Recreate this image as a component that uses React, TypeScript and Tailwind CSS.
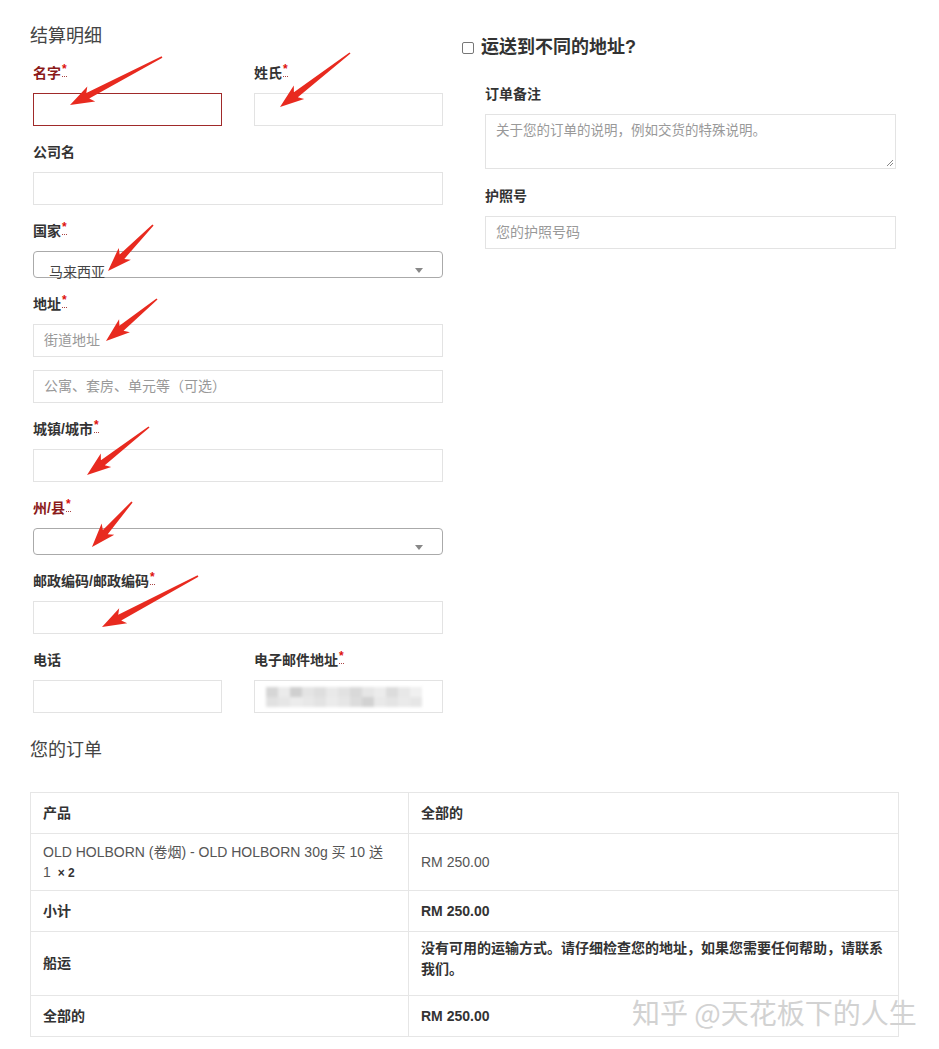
import React from "react";

type ArrowProps = { x1: number; y1: number; x2: number; y2: number };

function arrowPoints({ x1, y1, x2, y2 }: ArrowProps) {
  const dx = x2 - x1;
  const dy = y2 - y1;
  const len = Math.hypot(dx, dy);
  const ux = dx / len;
  const uy = dy / len;
  const nx = -uy;
  const ny = ux;
  const at = (t: number, w: number) =>
    `${(x1 + ux * t + nx * w).toFixed(1)},${(y1 + uy * t + ny * w).toFixed(1)}`;
  const head = 24;
  return [
    at(0, 0.8),
    at(len - head + 4, 3.2),
    at(len - head, 8.5),
    at(len, 0),
    at(len - head, -8.5),
    at(len - head + 4, -3.2),
    at(0, -0.8),
  ].join(" ");
}

const arrows: ArrowProps[] = [
  { x1: 162, y1: 57, x2: 70, y2: 105 },
  { x1: 350, y1: 53, x2: 280, y2: 107 },
  { x1: 153, y1: 225, x2: 108, y2: 271 },
  { x1: 157, y1: 299, x2: 106, y2: 341 },
  { x1: 149, y1: 427, x2: 87, y2: 475 },
  { x1: 132, y1: 502, x2: 92, y2: 547 },
  { x1: 198, y1: 576, x2: 102, y2: 627 },
];

const blur = [
  ["#d6d6d6", "#ebebeb", "#cfcfcf", "#e4e4e4", "#dedede", "#e9e9e9", "#e2e2e2", "#d9d9d9", "#e6e6e6", "#ececec", "#dcdcdc", "#e8e8e8", "#f0f0f0"],
  ["#e1e1e1", "#e6e6e6", "#ececec", "#e8e8e8", "#e3e3e3", "#ebebeb", "#e6e6e6", "#dcdcdc", "#d2d2d2", "#e9e9e9", "#e4e4e4", "#eaeaea", "#e6e6e6"],
];

function Req() {
  return (
    <abbr className="text-[#d11] no-underline border-b border-dotted border-[#a44] text-[12px] leading-none ml-[1px] align-top">
      *
    </abbr>
  );
}

function Label({ text, req, error }: { text: string; req?: boolean; error?: boolean }) {
  return (
    <label
      className={`block h-[20px] leading-[20px] mb-[10px] text-[14px] font-bold ${
        error ? "text-[#8b1a1a]" : "text-[#333]"
      }`}
    >
      {text}
      {req && <Req />}
    </label>
  );
}

function Input({ placeholder, error }: { placeholder?: string; error?: boolean }) {
  return (
    <div
      className={`h-[33px] w-full border bg-white px-[10px] flex items-center text-[14px] text-[#999] ${
        error ? "border-[#a02a2a]" : "border-[#e3e3e3]"
      }`}
    >
      {placeholder}
    </div>
  );
}

function Select({ value }: { value?: string }) {
  return (
    <div className="relative h-[27px] w-full border border-[#aaa] rounded-[4px] bg-white">
      <span className="absolute left-[15px] top-[10px] text-[14px] leading-[20px] text-[#444]">{value}</span>
      <span className="absolute right-[19px] top-[16px] w-0 h-0 border-l-[4px] border-r-[4px] border-t-[5px] border-l-transparent border-r-transparent border-t-[#888]" />
    </div>
  );
}

export default function App() {
  return (
    <div className="relative w-[939px] h-[1049px] bg-white overflow-hidden font-['Liberation_Sans','Noto_Sans_CJK_SC',sans-serif] text-[#333]">
      <div className="flex pl-[30px] pt-[23px]">
        {/* Billing */}
        <div className="w-[416px]">
          <h3 className="h-[27px] leading-[27px] text-[18px] font-normal text-[#444] mb-[13px]">结算明细</h3>
          <div className="px-[3px]">
            <div className="flex gap-[32px] mb-[16px]">
              <div className="flex-1">
                <Label text="名字" req error />
                <Input error />
              </div>
              <div className="flex-1">
                <Label text="姓氏" req />
                <Input />
              </div>
            </div>
            <div className="mb-[16px]">
              <Label text="公司名" />
              <Input />
            </div>
            <div className="mb-[16px]">
              <Label text="国家" req />
              <Select value="马来西亚" />
            </div>
            <div className="mb-[16px]">
              <Label text="地址" req />
              <Input placeholder="街道地址" />
              <div className="h-[13px]" />
              <Input placeholder="公寓、套房、单元等（可选）" />
            </div>
            <div className="mb-[16px]">
              <Label text="城镇/城市" req />
              <Input />
            </div>
            <div className="mb-[16px]">
              <Label text="州/县" req error />
              <Select />
            </div>
            <div className="mb-[16px]">
              <Label text="邮政编码/邮政编码" req />
              <Input />
            </div>
            <div className="flex gap-[32px]">
              <div className="flex-1">
                <Label text="电话" />
                <Input />
              </div>
              <div className="flex-1">
                <Label text="电子邮件地址" req />
                <div className="h-[33px] border border-[#e3e3e3] px-[11px] flex flex-col justify-center">
                  <div className="blur-[1.5px]">
                    {blur.map((row, i) => (
                      <div key={i} className="flex">
                        {row.map((c, j) => (
                          <div key={j} className="w-[12px] h-[10px]" style={{ background: c }} />
                        ))}
                      </div>
                    ))}
                  </div>
                </div>
              </div>
            </div>
          </div>
        </div>

        {/* Shipping / notes */}
        <div className="ml-[16px] w-[434px] pt-[11px]">
          <h3 className="flex items-center h-[27px] text-[18px] font-bold text-[#333]">
            <span className="w-[12px] h-[12px] border border-[#777] rounded-[2px] mr-[7px] bg-white" />
            运送到不同的地址?
          </h3>
          <div className="pl-[23px] pt-[23px]">
            <Label text="订单备注" />
            <div className="relative h-[55px] border border-[#e3e3e3] px-[10px] pt-[6px] text-[13.5px] text-[#999]">
              关于您的订单的说明，例如交货的特殊说明。
              <svg className="absolute right-[1px] bottom-[1px]" width="8" height="8" viewBox="0 0 8 8">
                <path d="M1 7 L7 1 M4 7 L7 4" stroke="#888" strokeWidth="1" />
              </svg>
            </div>
            <div className="h-[17px]" />
            <Label text="护照号" />
            <Input placeholder="您的护照号码" />
          </div>
        </div>
      </div>

      {/* Order */}
      <div className="pl-[30px] pr-[40px] pt-[24px]">
        <h3 className="h-[27px] leading-[27px] text-[18px] font-normal text-[#444]">您的订单</h3>
        <table className="mt-[28px] w-[869px] border-collapse border border-[#e6e6e6] text-[14px]">
          <colgroup>
            <col className="w-[378px]" />
            <col />
          </colgroup>
          <thead>
            <tr className="h-[41px]">
              <th className="border border-[#e6e6e6] px-[12px] text-left font-bold text-[#333]">产品</th>
              <th className="border border-[#e6e6e6] px-[12px] text-left font-bold text-[#333]">全部的</th>
            </tr>
          </thead>
          <tbody>
            <tr className="h-[57px]">
              <td className="border border-[#e6e6e6] px-[12px] leading-[20px] text-[#555]">
                OLD HOLBORN (卷烟) - OLD HOLBORN 30g 买 10 送{" "}
                <span className="whitespace-nowrap">
                  1 <strong className="ml-[3px] text-[#333] text-[12px]">× 2</strong>
                </span>
              </td>
              <td className="border border-[#e6e6e6] px-[12px] text-[#555]">RM 250.00</td>
            </tr>
            <tr className="h-[41px]">
              <td className="border border-[#e6e6e6] px-[12px] font-bold text-[#333]">小计</td>
              <td className="border border-[#e6e6e6] px-[12px] font-bold text-[#333]">RM 250.00</td>
            </tr>
            <tr className="h-[63px]">
              <td className="border border-[#e6e6e6] px-[12px] font-bold text-[#333]">船运</td>
              <td className="border border-[#e6e6e6] px-[12px] pt-[6px] pb-[15px] align-top leading-[21px] font-bold text-[#333]">
                没有可用的运输方式。请仔细检查您的地址，如果您需要任何帮助，请联系我们。
              </td>
            </tr>
            <tr className="h-[41px]">
              <td className="border border-[#e6e6e6] px-[12px] font-bold text-[#333]">全部的</td>
              <td className="border border-[#e6e6e6] px-[12px] font-bold text-[#333]">RM 250.00</td>
            </tr>
          </tbody>
        </table>
      </div>

      {/* watermark */}
      <div className="absolute left-[632px] top-[994px] text-[28px] leading-[36px] text-[#d2d2d2] whitespace-nowrap font-['Noto_Sans_CJK_SC',sans-serif]">
        知乎 @天花板下的人生
      </div>

      {/* annotation arrows */}
      <svg className="absolute inset-0 pointer-events-none" width="939" height="1049">
        {arrows.map((a, i) => (
          <polygon key={i} points={arrowPoints(a)} fill="#e82a1f" />
        ))}
      </svg>
    </div>
  );
}
